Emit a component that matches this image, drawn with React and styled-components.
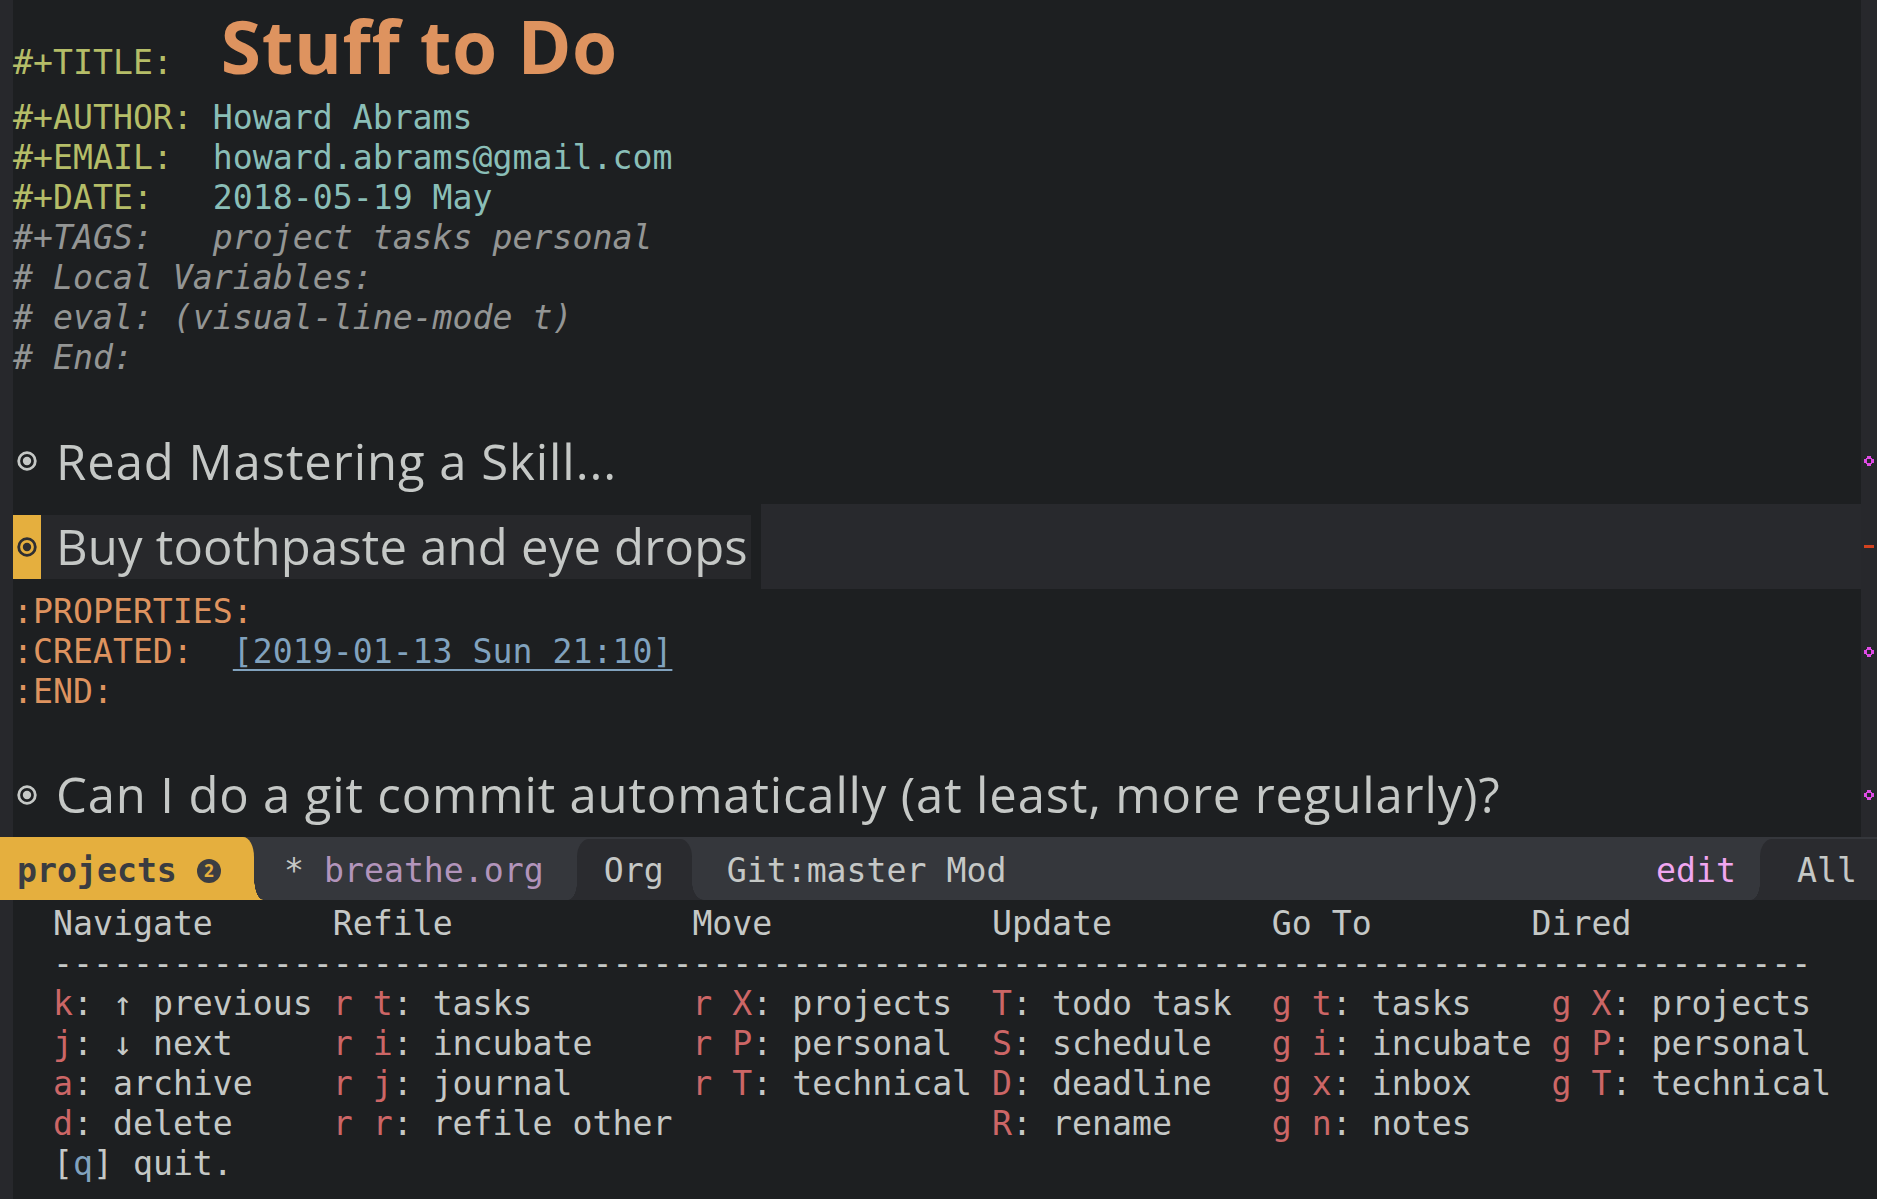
import React from "react";
import styled, { createGlobalStyle } from "styled-components";

const c = {
    bg: "#1d1f21",
    fringe: "#27282c",
    fg: "#c5c8c6",
    comment: "#939594",
    green: "#b5bd68",
    aqua: "#8abeb7",
    orange: "#de935f",
    blue: "#81a2be",
    red: "#cc6666",
    purple: "#b294bb",
    pink: "#f0a6f0",
    gold: "#e5af3e",
    modeline: "#35373c",
    tab: "#2a2b2f",
    curLine: "#28292d",
};

const mono = `"DejaVu Sans Mono", "Liberation Mono", monospace`;
const sans = `"Open Sans", "Noto Sans", sans-serif`;

const GlobalStyle = createGlobalStyle`
    html, body {
        margin: 0;
        padding: 0;
        background: ${c.bg};
        overflow: hidden;
    }
`;

const Frame = styled.div`
    display: flex;
    flex-direction: column;
    width: 1877px;
    height: 1199px;
    background: ${c.bg};
    color: ${c.fg};
    font-family: ${mono};
    font-size: 33.2px;
`;

const Editor = styled.div`
    display: flex;
    height: 837px;
    flex-shrink: 0;
`;

const LeftFringe = styled.div`
    width: 13px;
    flex-shrink: 0;
    background: ${c.fringe};
`;

const Buffer = styled.div`
    flex: 1;
    display: flex;
    flex-direction: column;
    min-width: 0;
`;

const Line = styled.div`
    display: flex;
    height: ${(p) => p.$h || 40}px;
    flex-shrink: 0;
`;

const LineText = styled.div`
    flex: 1;
    min-width: 0;
    line-height: 40px;
    white-space: pre;
    padding-top: ${(p) => p.$pt || 0}px;
`;

const FringeCell = styled.div`
    width: 16px;
    flex-shrink: 0;
    background: ${c.fringe};
    display: flex;
    align-items: center;
    justify-content: center;
    box-sizing: border-box;
    padding-top: ${(p) => p.$pt || 0}px;
`;

const Tok = styled.span`
    color: ${(p) => p.$c || c.fg};
    font-style: ${(p) => (p.$italic ? "italic" : "normal")};
`;

const TitleText = styled.div`
    flex: 1;
    display: flex;
    align-items: baseline;
    padding-top: 1px;
    line-height: 40px;
    white-space: pre;
`;

const DocTitle = styled.span`
    display: inline-block;
    padding: 0 6px;
    font-family: ${sans};
    font-size: 73px;
    line-height: 90px;
    font-weight: 700;
    letter-spacing: 0.6px;
    color: ${c.orange};
    margin-left: 42px;
`;

const DateLink = styled.span`
    color: ${c.blue};
    text-decoration: underline;
    text-decoration-thickness: 2px;
    text-underline-offset: 6px;
`;

const HeadingArea = styled.div`
    flex: 1;
    display: flex;
    align-items: center;
    min-width: 0;
`;

const HeadingBox = styled.div`
    display: flex;
    align-items: center;
    height: 64px;
    padding-right: 3px;
    background: ${(p) => (p.$current ? "#27282b" : "transparent")};
`;

const BulletSlot = styled.div`
    width: 28px;
    height: 64px;
    display: flex;
    align-items: center;
    justify-content: center;
    background: ${(p) => (p.$current ? c.gold : "transparent")};
`;

const HeadingText = styled.span`
    font-family: ${sans};
    font-size: 49px;
    line-height: 1.2;
    letter-spacing: ${(p) => p.$ls}px;
    color: ${c.fg};
    padding-left: 15px;
    white-space: pre;
`;

const LineBand = styled.div`
    flex: 1;
    align-self: stretch;
    margin-left: 10px;
    background: ${c.curLine};
`;

const Dash = styled.span`
    width: 10px;
    height: 3px;
    background: #d2421f;
`;

const ModeLine = styled.div`
    display: flex;
    height: 63px;
    flex-shrink: 0;
    background: ${c.modeline};
    white-space: pre;
`;

const ProjectsSeg = styled.div`
    position: relative;
    display: flex;
    align-items: center;
    width: 254px;
    box-sizing: border-box;
    padding: 4px 0 0 17px;
    background: ${c.gold};
    color: #3a3c41;
    font-weight: bold;
    border-top-right-radius: 11px 20px;
    &::after {
        content: "";
        position: absolute;
        right: -9px;
        bottom: 0;
        width: 9px;
        height: 22px;
        background: radial-gradient(ellipse 9px 22px at 100% 0, transparent 97%, ${c.gold} 100%);
    }
`;

const Badge = styled.span`
    display: inline-flex;
    align-items: center;
    justify-content: center;
    width: 24px;
    height: 24px;
    margin-left: 20px;
    border-radius: 50%;
    background: #3b3d42;
    color: ${c.gold};
    font-family: ${sans};
    font-size: 17px;
    font-weight: 700;
`;

const Segment = styled.div`
    display: flex;
    align-items: center;
    padding-top: 4px;
    margin-left: ${(p) => p.$ml || 0}px;
    color: ${(p) => p.$c || c.fg};
`;

const Tab = styled.div`
    position: relative;
    display: flex;
    align-items: center;
    margin-top: 2px;
    margin-left: ${(p) => p.$ml || 0}px;
    padding: 2px ${(p) => p.$pr}px 0 ${(p) => p.$pl}px;
    width: ${(p) => (p.$w ? `${p.$w}px` : "auto")};
    box-sizing: border-box;
    background: ${c.tab};
    border-top-left-radius: 12px 18px;
    border-top-right-radius: ${(p) => (p.$edge ? 0 : "12px 18px")};
    &::before {
        content: "";
        position: absolute;
        left: -9px;
        bottom: 0;
        width: 9px;
        height: 18px;
        background: radial-gradient(ellipse 9px 18px at 0 0, transparent 97%, ${c.tab} 100%);
    }
    &::after {
        content: "";
        display: ${(p) => (p.$edge ? "none" : "block")};
        position: absolute;
        right: -12px;
        bottom: 0;
        width: 12px;
        height: 18px;
        background: radial-gradient(ellipse 12px 18px at 100% 0, transparent 97%, ${c.tab} 100%);
    }
`;

const Spacer = styled.div`
    flex: 1;
`;

const Hydra = styled.div`
    flex: 1;
    display: flex;
`;

const HydraBody = styled.div`
    flex: 1;
    padding: 4px 0 0 40px;
`;

const HydraLine = styled.div`
    height: 40px;
    line-height: 40px;
    white-space: pre;
`;

const Cell = styled.span`
    display: inline-block;
    width: ${(p) => p.$w}ch;
`;

const Key = styled.span`
    color: ${(p) => (p.$blue ? c.blue : c.red)};
`;

function Bullet({ color }) {
    return (
        <svg width="22" height="22" viewBox="0 0 22 22">
            <circle cx="11" cy="11" r="8.3" fill="none" stroke={color} strokeWidth="2.8" />
            <circle cx="11" cy="11" r="4.2" fill={color} />
        </svg>
    );
}

function Diamond() {
    return (
        <svg width="10" height="10" viewBox="0 0 6 6" shapeRendering="crispEdges">
            <path
                d="M2 0h2v1h1v1h1v2h-1v1h-1v1h-2v-1h-1v-1h-1v-2h1v-1h1z M2 2v2h2v-2z"
                fill="#e04ae6"
                fillRule="evenodd"
            />
        </svg>
    );
}

function Heading({ children, current, marker, h, ls = 0.7 }) {
    return (
        <Line $h={h}>
            <HeadingArea>
                <HeadingBox $current={current}>
                    <BulletSlot $current={current}>
                        <Bullet color={current ? "#2d2e32" : c.fg} />
                    </BulletSlot>
                    <HeadingText $ls={ls}>{children}</HeadingText>
                </HeadingBox>
                {current && <LineBand />}
            </HeadingArea>
            <FringeCell>{marker}</FringeCell>
        </Line>
    );
}

const widths = [14, 18, 15, 14, 14, 16];

const hydraRows = [
    ["k: ↑ previous", "r t: tasks", "r X: projects", "T: todo task", "g t: tasks", "g X: projects"],
    ["j: ↓ next", "r i: incubate", "r P: personal", "S: schedule", "g i: incubate", "g P: personal"],
    ["a: archive", "r j: journal", "r T: technical", "D: deadline", "g x: inbox", "g T: technical"],
    ["d: delete", "r r: refile other", "", "R: rename", "g n: notes", ""],
];

function Binding({ text }) {
    if (!text) return null;
    const i = text.indexOf(":");
    return (
        <>
            <Key>{text.slice(0, i)}</Key>
            {text.slice(i)}
        </>
    );
}

export default function App() {
    return (
        <Frame>
            <GlobalStyle />
            <Editor>
                <LeftFringe />
                <Buffer>
                    <Line $h={98}>
                        <TitleText>
                            <Tok $c={c.green}>#+TITLE:</Tok>
                            <DocTitle>Stuff to Do</DocTitle>
                        </TitleText>
                        <FringeCell />
                    </Line>
                    <Line>
                        <LineText>
                            <Tok $c={c.green}>{"#+AUTHOR: "}</Tok>
                            <Tok $c={c.aqua}>Howard Abrams</Tok>
                        </LineText>
                        <FringeCell />
                    </Line>
                    <Line>
                        <LineText>
                            <Tok $c={c.green}>{"#+EMAIL:  "}</Tok>
                            <Tok $c={c.aqua}>howard.abrams@gmail.com</Tok>
                        </LineText>
                        <FringeCell />
                    </Line>
                    <Line>
                        <LineText>
                            <Tok $c={c.green}>{"#+DATE:   "}</Tok>
                            <Tok $c={c.aqua}>2018-05-19 May</Tok>
                        </LineText>
                        <FringeCell />
                    </Line>
                    <Line>
                        <LineText>
                            <Tok $c={c.comment} $italic>{"#+TAGS:   project tasks personal"}</Tok>
                        </LineText>
                        <FringeCell />
                    </Line>
                    <Line>
                        <LineText>
                            <Tok $c={c.comment} $italic>{"# Local Variables:"}</Tok>
                        </LineText>
                        <FringeCell />
                    </Line>
                    <Line>
                        <LineText>
                            <Tok $c={c.comment} $italic>{"# eval: (visual-line-mode t)"}</Tok>
                        </LineText>
                        <FringeCell />
                    </Line>
                    <Line>
                        <LineText>
                            <Tok $c={c.comment} $italic>{"# End:"}</Tok>
                        </LineText>
                        <FringeCell />
                    </Line>
                    <Line>
                        <LineText />
                        <FringeCell />
                    </Line>
                    <Heading h={86} ls={0.95} marker={<Diamond />}>
                        Read Mastering a Skill...
                    </Heading>
                    <Heading h={85} current ls={0.2} marker={<Dash />}>
                        Buy toothpaste and eye drops
                    </Heading>
                    <Line $h={43}>
                        <LineText $pt={3}>
                            <Tok $c={c.orange}>:PROPERTIES:</Tok>
                        </LineText>
                        <FringeCell $pt={3} />
                    </Line>
                    <Line>
                        <LineText>
                            <Tok $c={c.orange}>{":CREATED:  "}</Tok>
                            <DateLink>[2019-01-13 Sun 21:10]</DateLink>
                        </LineText>
                        <FringeCell>
                            <Diamond />
                        </FringeCell>
                    </Line>
                    <Line>
                        <LineText>
                            <Tok $c={c.orange}>:END:</Tok>
                        </LineText>
                        <FringeCell />
                    </Line>
                    <Line>
                        <LineText />
                        <FringeCell />
                    </Line>
                    <Heading h={85} ls={0.85} marker={<Diamond />}>
                        Can I do a git commit automatically (at least, more regularly)?
                    </Heading>
                </Buffer>
            </Editor>

            <ModeLine>
                <ProjectsSeg>
                    projects<Badge>2</Badge>
                </ProjectsSeg>
                <Segment $ml={30}>
                    {"* "}
                    <Tok $c={c.purple}>breathe.org</Tok>
                </Segment>
                <Tab $ml={33} $pl={27} $pr={28}>
                    Org
                </Tab>
                <Segment $ml={35}>Git:master Mod</Segment>
                <Spacer />
                <Segment $c={c.pink}>edit</Segment>
                <Tab $ml={24} $pl={37} $pr={0} $w={117} $edge>
                    All
                </Tab>
            </ModeLine>

            <Hydra>
                <LeftFringe />
                <HydraBody>
                    <HydraLine>
                        {"Navigate      Refile            Move           Update        Go To        Dired"}
                    </HydraLine>
                    <HydraLine>{"-".repeat(88)}</HydraLine>
                    {hydraRows.map((row, r) => (
                        <HydraLine key={r}>
                            {row.map((cell, i) => (
                                <Cell key={i} $w={widths[i]}>
                                    <Binding text={cell} />
                                </Cell>
                            ))}
                        </HydraLine>
                    ))}
                    <HydraLine>
                        [<Key $blue>q</Key>] quit.
                    </HydraLine>
                </HydraBody>
            </Hydra>
        </Frame>
    );
}
